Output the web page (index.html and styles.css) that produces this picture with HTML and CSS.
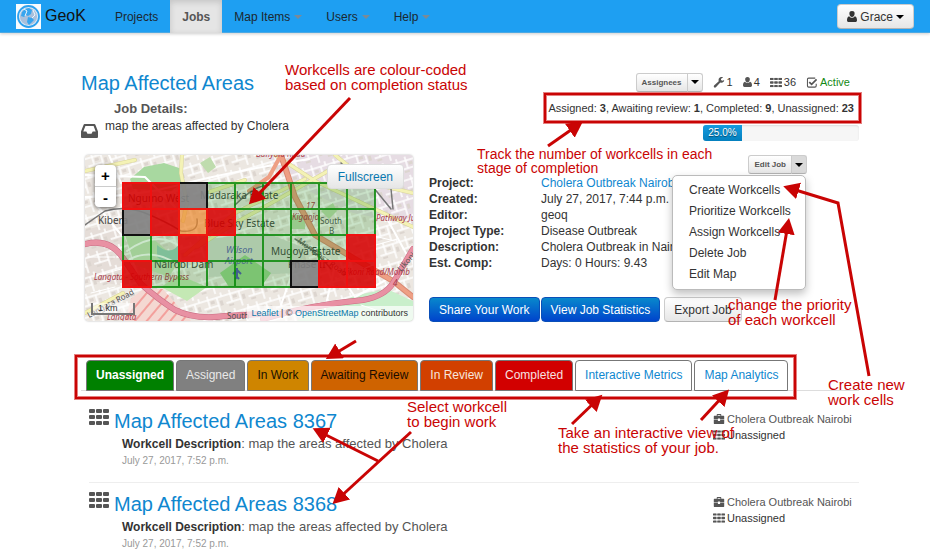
FILE: index.html
```html
<!DOCTYPE html>
<html lang="en">
<head>
<meta charset="utf-8">
<title>GeoK - Map Affected Areas</title>
<link rel="stylesheet" href="styles.css">
</head>
<body>
<svg class="sprite" aria-hidden="true">
  <symbol id="i-grid" viewBox="0 0 20 16"><path d="M1 0h4q1 0 1 1v2q0 1-1 1H1q-1 0-1-1V1q0-1 1-1zM8 0h4q1 0 1 1v2q0 1-1 1H8q-1 0-1-1V1q0-1 1-1zM15 0h4q1 0 1 1v2q0 1-1 1h-4q-1 0-1-1V1q0-1 1-1zM1 6h4q1 0 1 1v2q0 1-1 1H1q-1 0-1-1V7q0-1 1-1zM8 6h4q1 0 1 1v2q0 1-1 1H8q-1 0-1-1V7q0-1 1-1zM15 6h4q1 0 1 1v2q0 1-1 1h-4q-1 0-1-1V7q0-1 1-1zM1 12h4q1 0 1 1v2q0 1-1 1H1q-1 0-1-1v-2q0-1 1-1zM8 12h4q1 0 1 1v2q0 1-1 1H8q-1 0-1-1v-2q0-1 1-1zM15 12h4q1 0 1 1v2q0 1-1 1h-4q-1 0-1-1v-2q0-1 1-1z"/></symbol>
  <symbol id="i-user" viewBox="0 0 10 11"><path d="M5 0a2.6 2.6 0 0 1 2.6 2.8C7.600 4.500 6.500 6 5 6S2.400 4.500 2.400 2.800A2.600 2.600 0 0 1 5 0zM2.200 5.200C3 6.200 4 6.700 5 6.700s2-.5 2.800-1.500C9.500 5.500 10 7.500 10 9.200 10 10.300 9.300 11 8.400 11H1.600C.7 11 0 10.300 0 9.200 0 7.500.5 5.500 2.200 5.200z"/></symbol>
  <symbol id="i-wrench" viewBox="0 0 12 12"><path d="M11.800 3.300c-.3 1.800-1.500 3-3.200 3-.4 0-.8-.1-1.200-.2L2.600 11.300a1.400 1.400 0 0 1-2-2L5.700 4.500C5 2.300 6.300.2 8.600.1c.7 0 1.300.1 1.800.4L8.200 1.900v1.500l1.400.8z"/></symbol>
  <symbol id="i-check" viewBox="0 0 12 12"><path d="M9.500 1.200H2.400Q1 1.200 1 2.600v7Q1 11 2.400 11h6.800q1.400 0 1.400-1.400V7.300" fill="none" stroke="currentColor" stroke-width="1.200"/><path d="M3 5.500l2.600 2.500L11 2.600" fill="none" stroke="currentColor" stroke-width="1.900"/></symbol>
  <symbol id="i-case" viewBox="0 0 12 11"><path d="M3.500 2V.8Q3.500 0 4.300 0h3.400q.8 0 .8.800V2H11q1 0 1 1v3H7.200V5H4.800v1H0V3q0-1 1-1zm1-1v1h3V1zM0 6.700h4.800v1h2.400v-1H12V10q0 1-1 1H1q-1 0-1-1z"/></symbol>
  <symbol id="i-inbox" viewBox="0 0 17 14"><path fill-rule="evenodd" d="M3.600 0h9.800q.7 0 1 .7L17 7.500V13q0 1-1 1H1q-1 0-1-1V7.500L2.600.7q.3-.7 1-.7zm.8 2L2.300 7.600h3L6.500 9.800h4l1.200-2.200h3L12.600 2z"/></symbol>
</svg>

<header class="navbar">
  <a class="brand" href="#">
    <svg class="logo" viewBox="0 0 25 25" aria-hidden="true"><rect width="25" height="25" fill="#f7fbfe"/><circle cx="12.500" cy="12.500" r="10.500" fill="#dceaf7" stroke="#2da1ee" stroke-width="1.800"/><circle cx="12.500" cy="12.500" r="8.600" fill="#a8c0dc"/><path d="M13 4l3 2-1 4-3 2-2-1-2 2-3-1 1-4 3-3zM12 13l4 1 2 2-3 3-2 2-2-3z" fill="#36a5ef"/><path d="M8 5l3 2-2 5M17 6l2 5-3 3" fill="none" stroke="#eef6fc"/></svg>
    <span>GeoK</span>
  </a>
  <nav class="nav">
    <a href="#">Projects</a>
    <a href="#" class="active">Jobs</a>
    <a href="#">Map Items<i class="caret"></i></a>
    <a href="#">Users<i class="caret"></i></a>
    <a href="#">Help<i class="caret"></i></a>
  </nav>
  <button class="btn user"><svg viewBox="0 0 10 11" aria-hidden="true"><use href="#i-user"/></svg>Grace<i class="caret"></i></button>
</header>

<main class="page">
  <section class="head">
    <div class="intro">
      <h1><a href="#">Map Affected Areas</a></h1>
      <h2>Job Details:</h2>
      <p><svg viewBox="0 0 17 14" aria-hidden="true"><use href="#i-inbox"/></svg>map the areas affected by Cholera</p>
    </div>
    <div class="status">
      <div class="stats">
        <div class="split"><button class="mini">Assignees</button><button class="mini" aria-label="Show assignees"><i class="caret"></i></button></div>
        <span><svg class="s12" viewBox="0 0 12 12"><use href="#i-wrench"/></svg>1</span>
        <span><svg class="s10" viewBox="0 0 10 11"><use href="#i-user"/></svg>4</span>
        <span><svg class="s12" viewBox="0 0 20 16"><use href="#i-grid"/></svg>36</span>
        <span><svg class="s12" viewBox="0 0 12 12"><use href="#i-check"/></svg><em>Active</em></span>
      </div>
      <p class="counts">Assigned: <b>3</b>, Awaiting review: <b>1</b>, Completed: <b>9</b>, Unassigned: <b>23</b></p>
      <div class="progress"><div class="bar" style="width:25%">25.0%</div></div>
    </div>
  </section>

  <section class="job">
    <div class="map">
      <svg viewBox="0 0 328 166" preserveAspectRatio="xMidYMid slice" role="img" aria-label="Map of the job's workcells">
        <defs>
          <pattern id="streets" width="23" height="19" patternUnits="userSpaceOnUse" patternTransform="rotate(-17)"><path d="M0 4h23M0 12h15M6 0v12M15 4v15M20 0v4" fill="none" stroke="#fff" stroke-width="1.500"/><path d="M8 6h4v3H8zM17 8h3v5h-3zM2 14h5v2H2z" fill="#dcd5cf"/></pattern>
          <pattern id="hatch" width="9" height="9" patternUnits="userSpaceOnUse" patternTransform="rotate(40)"><path d="M1 0v9" stroke="#f3a09c" stroke-width="2"/></pattern>
        </defs>
        <rect width="328" height="166" fill="#ece7e1"/>
        <path d="M180 0h148v70l-60-12-60-30z" fill="#e6dce3"/>
        <path d="M0 75l38-10 40 10 20 30-30 30-68-10z" fill="#e5ddd8"/>
        <rect width="328" height="166" fill="url(#streets)"/>
        <path d="M45 24l14-12 20-4 18 6 1 14-12 8-38-2z" fill="#a8d8a0"/>
        <path d="M40 80l26 2 28 24-10 16-34-12z" fill="#cbe3bd"/>
        <path d="M72 90q14 12 23-2v16q-14 6-23-2z" fill="#9fcfc0"/>
        <path d="M122 84l60-6 40 16-10 24-88 4z" fill="#d9dcd5"/>
        <path d="M135 118l25-18 26 18-10 14h-32z" fill="#9bd58f"/>
        <path d="M222 160l50-20 30-6 26 12v20H212z" fill="#c9efcb"/>
        <path d="M58 134h20l28 32H40l6-22z" fill="#f4d8d2"/><path d="M58 134h20l28 32H40l6-22z" fill="url(#hatch)"/>
        <path d="M76 132l18-12 28 12-20 14z" fill="#c4e8b4"/>
        <path d="M115 8l10-6 6 10-8 6zM206 60h14v14h-14zM236 56l12-8 4 8-8 8z" fill="#bfdcae"/>
        <g fill="none" stroke-linecap="round" stroke-linejoin="round">
          <path d="M0 42q50 0 94-12t130-26M0 20l60 2 30 30M24 0l12 28M10 48l28 34M42 96q30-22 54-4M45 104q20-10 42 2M250 112l20 30 40-22M196 150l14-40M240 154l10-44M300 60l22 40-14 30" stroke="#fff" stroke-width="2"/>
          <path d="M0 16l50-11M97 0l-1 18 6 30-4 18M0 158l38-20M112 92l38-24 40-22 60-34M190 0l40 26 98 46M220 24l-70 34-50 42M160 25l-36 12M250 0l34 28 44 10" stroke="#d8d49c" stroke-width="4"/>
          <path d="M0 16l50-11M97 0l-1 18 6 30-4 18M0 158l38-20M112 92l38-24 40-22 60-34M190 0l40 26 98 46M220 24l-70 34-50 42M160 25l-36 12M250 0l34 28 44 10" stroke="#f4f2b5" stroke-width="3"/>
          <path d="M196 0l14 42 20 38 40 24 38 22 20 16" stroke="#d98872" stroke-width="6"/>
          <path d="M196 0l14 42 20 38 40 24 38 22 20 16M196 0l-12 22-20 14" stroke="#ee9f84" stroke-width="4"/>
          <path d="M0 89q25-6 38 14l18 26q18 16 34 26 20 10 50 6l34-2M178 164q46-14 100-19 22-4 30-17l20-34" stroke="#c96c83" stroke-width="6"/>
          <path d="M0 89q25-6 38 14l18 26q18 16 34 26 20 10 50 6l34-2M178 164q46-14 100-19 22-4 30-17l20-34" stroke="#e891a3" stroke-width="5"/>
          <path d="M0 70l20-14q20-6 40 2t36 18q18 2 16-12M150 50q20-20 34-20M256 8l8 8h14l12 10M268 12l-4 6M288 32l18 22M306 34l2 20M210 84q24 14 36 30" stroke="#777" stroke-width="1.500"/>
          <path d="M2 102h28M8 122l28-8M6 138l24-6M252 124l36-14M264 160l44-4M276 150l30 10M276 78l34 8M284 92l28-8" stroke="#fff"/>
        </g>
        <path d="M152 113v10M148 119l4-4 4 4M150 124l2-2 2 2" stroke="#5656b4" fill="none" stroke-width="2"/>
        <g class="place">
          <text x="43" y="47">Ngumo West</text><text x="115" y="44">Madaraka Estate</text><text x="13" y="69">Kibera</text>
          <text x="119" y="72">Blue Sky Estate</text><text x="69" y="113">Nairobi Dam</text><text x="186" y="100">Mugoya Estate</text><text x="203" y="113">Phase II</text>
        </g>
        <g class="road">
          <text x="9" y="125">Langata - Southern Bypass</text><text x="207" y="65">Kiganjo</text><text x="291" y="66">Pathway Ju</text><text x="258" y="120">Likoni Road/Momb</text><text x="22" y="165">Langata</text><text x="171" y="2">Bunyala Road</text><text x="221" y="54">17</text><text x="308" y="131">4</text>
        </g>
        <g class="area"><text x="141" y="98">Wilson</text><text x="140" y="109">Airport</text></g>
        <g class="street"><text x="235" y="69">South</text><text x="244" y="79">B</text><text x="142" y="164">South</text><text transform="translate(212 87) rotate(36)">Mombasa Road</text><text transform="translate(4 163) rotate(-28)">Langata Road</text><text transform="translate(316 117) rotate(-48)">Likoni</text></g>

        <g class="cell green">
          <path d="M122 28h28v26h-28zM150 28h28v26h-28zM178 28h28v26h-28zM206 28h28v26h-28zM234 28h28v26h-28zM262 28h28v26h-28zM150 54h28v26h-28zM178 54h28v26h-28zM206 54h28v26h-28zM234 54h28v26h-28zM262 54h28v26h-28zM38 80h28v26H38zM66 80h28v26H66zM122 80h28v26h-28zM150 80h28v26h-28zM178 80h28v26h-28zM206 80h28v26h-28zM234 80h28v26h-28zM66 106h28v26H66zM94 106h28v26H94zM122 106h28v26h-28zM150 106h28v26h-28zM178 106h28v26h-28z"/>
        </g>
        <g class="cell gray"><path d="M94 28h28v26H94zM38 54h28v26H38zM206 106h28v26h-28z"/></g>
        <g class="cell red"><path d="M38 28h28v26H38zM66 28h28v26H66zM66 54h28v26H66zM122 54h28v26h-28zM94 80h28v26H94zM262 80h28v26h-28zM38 106h28v26H38zM234 106h28v26h-28zM262 106h28v26h-28z"/></g>
        <g class="cell orange"><path d="M94 54h28v26H94z"/></g>
      </svg>
      <div class="zoom"><button aria-label="Zoom in">+</button><button aria-label="Zoom out">-</button></div>
      <button class="btn full">Fullscreen</button>
      <span class="scale">1 km</span>
      <p class="credit"><a href="#">Leaflet</a> | © <a href="#">OpenStreetMap</a> contributors</p>
    </div>
    <div class="info">
      <div class="edit">
        <div class="split"><button class="mini">Edit Job</button><button class="mini open" aria-label="Edit options" aria-expanded="true"><i class="caret"></i></button></div>
        <ul class="menu">
          <li><a href="#">Create Workcells</a></li>
          <li><a href="#">Prioritize Workcells</a></li>
          <li><a href="#">Assign Workcells</a></li>
          <li><a href="#">Delete Job</a></li>
          <li><a href="#">Edit Map</a></li>
        </ul>
      </div>
      <dl>
        <dt>Project:</dt><dd><a href="#">Cholera Outbreak Nairobi</a></dd>
        <dt>Created:</dt><dd>July 27, 2017, 7:44 p.m.</dd>
        <dt>Editor:</dt><dd>geoq</dd>
        <dt>Project Type:</dt><dd>Disease Outbreak</dd>
        <dt>Description:</dt><dd>Cholera Outbreak in Nairobi</dd>
        <dt>Est. Comp:</dt><dd>Days: 0 Hours: 9.43</dd>
      </dl>
      <div class="actions">
        <button class="btn primary">Share Your Work</button>
        <button class="btn primary">View Job Statistics</button>
        <button class="btn export">Export Job</button>
      </div>
    </div>
  </section>

  <nav class="tabs">
    <a href="#" class="t-un">Unassigned</a>
    <a href="#" class="t-as">Assigned</a>
    <a href="#" class="t-work">In Work</a>
    <a href="#" class="t-await">Awaiting Review</a>
    <a href="#" class="t-rev">In Review</a>
    <a href="#" class="t-done">Completed</a>
    <a href="#">Interactive Metrics</a>
    <a href="#">Map Analytics</a>
  </nav>

  <section class="list">
    <article>
      <svg class="gicon" viewBox="0 0 20 16" aria-hidden="true"><use href="#i-grid"/></svg>
      <div class="body">
        <h3><a href="#">Map Affected Areas 8367</a></h3>
        <p><b>Workcell Description</b>: map the areas affected by Cholera</p>
        <time>July 27, 2017, 7:52 p.m.</time>
      </div>
      <ul class="meta">
        <li><svg viewBox="0 0 12 11"><use href="#i-case"/></svg>Cholera Outbreak Nairobi</li>
        <li class="dark"><svg viewBox="0 0 20 16"><use href="#i-grid"/></svg>Unassigned</li>
      </ul>
    </article>
    <article>
      <svg class="gicon" viewBox="0 0 20 16" aria-hidden="true"><use href="#i-grid"/></svg>
      <div class="body">
        <h3><a href="#">Map Affected Areas 8368</a></h3>
        <p><b>Workcell Description</b>: map the areas affected by Cholera</p>
        <time>July 27, 2017, 7:52 p.m.</time>
      </div>
      <ul class="meta">
        <li><svg viewBox="0 0 12 11"><use href="#i-case"/></svg>Cholera Outbreak Nairobi</li>
        <li class="dark"><svg viewBox="0 0 20 16"><use href="#i-grid"/></svg>Unassigned</li>
      </ul>
    </article>
  </section>
</main>

<div class="notes">
  <svg width="930" height="549" aria-hidden="true">
    <defs><marker id="head" markerUnits="userSpaceOnUse" markerWidth="18" markerHeight="18" refX="10" refY="8.500" orient="auto"><path d="M0 0l16 8.500-16 8.500z" fill="#c90404"/></marker></defs>
    <g fill="none" stroke="#e58080" stroke-width="4"><rect x="545" y="94" width="315" height="28"/><rect x="76" y="356" width="719" height="42"/></g>
    <g fill="none" stroke="#c90404" stroke-width="3">
      <g stroke-width="2"><rect x="545" y="94" width="315" height="28"/><rect x="76" y="356" width="719" height="42"/></g>
      <path marker-end="url(#head)" d="M350 98L253 200"/><path marker-end="url(#head)" d="M548 146L578 125"/><path marker-end="url(#head)" d="M869 376L838 203L789 188"/><path marker-end="url(#head)" d="M775 300L788 224"/><path marker-end="url(#head)" d="M356 341L331 356"/><path marker-end="url(#head)" d="M411 432L337 500"/><path marker-end="url(#head)" d="M378 461L318 431"/><path marker-end="url(#head)" d="M572 424L598 399"/><path marker-end="url(#head)" d="M701 420L725 394"/>
    </g>
  </svg>
  <p class="note n-color">Workcells are colour-coded<br>based on completion status</p>
  <p class="note n-track">Track the number of workcells in each<br>stage of completion</p>
  <p class="note n-priority">change the priority<br>of each workcell</p>
  <p class="note n-create">Create new<br>work cells</p>
  <p class="note n-select">Select workcell<br>to begin work</p>
  <p class="note n-stats">Take an interactive view of<br>the statistics of your job.</p>
</div>
</body>
</html>
```
FILE: styles.css
```css
* { box-sizing: border-box; }
html { scrollbar-width: none; }
body {
  margin: 0;
  position: relative;
  height: 100vh;
  overflow: hidden;
  background: #fff;
  color: #333;
  font: 12px/16px "Liberation Sans", Arial, sans-serif;
}
h1, h2, h3, p, ul, dl, dd { margin: 0; padding: 0; }
ul { list-style: none; }
a { color: #0f87cf; text-decoration: none; }
button { font-family: inherit; color: #333; margin: 0; cursor: pointer; }
svg { display: block; fill: currentColor; }
.sprite { position: absolute; width: 0; height: 0; }

.caret {
  display: inline-block;
  border: 4px solid transparent;
  border-top-color: #000;
  border-bottom: 0;
}
.btn {
  height: 25px;
  padding: 0 10px;
  border: 1px solid #ccc;
  border-bottom-color: #b3b3b3;
  border-radius: 4px;
  background: linear-gradient(#fff, #e6e6e6);
  font-size: 12px;
}

.navbar {
  display: flex;
  height: 33px;
  padding: 0 16px;
  background: #1e9ff2;
  border-bottom: 1px solid #4ba9e4;
  box-shadow: 0 1px 3px rgba(0, 0, 0, .2);
}
.brand { display: flex; align-items: center; gap: 4px; margin-right: 17px; color: #111; font-size: 16px; }
.brand span { padding-bottom: 1px; }
.logo { width: 25px; height: 25px; }
.nav { display: flex; height: 33px; }
.nav a { display: flex; align-items: center; gap: 4px; padding: 0 12px; color: #1c2730; }
.nav .active {
  background: #e5e5e5;
  color: #555;
  font-weight: bold;
  box-shadow: inset 0 2px 6px rgba(0, 0, 0, .15);
}
.nav .caret { border-top-color: #7b8a96; }
.user { display: flex; align-items: center; gap: 3px; margin: 4px 0 0 auto; padding: 0 9px; }
.user svg { width: 10px; height: 11px; }

.page { padding: 0 71px 0 81px; }
.head { display: flex; justify-content: space-between; height: 122px; padding-top: 38px; }
.intro h1 { font-size: 20px; line-height: 24px; font-weight: normal; }
.intro h2 { margin: 6px 0 1px 33px; font-size: 13px; line-height: 16px; color: #555; }
.intro p { display: flex; gap: 7px; }
.intro svg { width: 17px; height: 14px; margin-top: 6px; color: #555; }

.status { display: flex; flex-direction: column; align-items: flex-end; font-size: 11px; }
.stats { display: flex; align-items: center; gap: 10px; height: 22px; padding-right: 9px; }
.stats span { display: flex; align-items: center; gap: 2px; }
.stats em { font-style: normal; color: #138a13; }
.stats svg { color: #555; }
.s12 { width: 12px; height: 11px; }
.s10 { width: 9px; height: 10px; }
.split { display: flex; }
.mini {
  height: 19px;
  padding: 0 5px;
  border: 1px solid #ccc;
  border-bottom-color: #b3b3b3;
  border-radius: 3px 0 0 3px;
  background: linear-gradient(#fff, #e6e6e6);
  font-size: 8px;
  font-weight: bold;
  color: #555;
}
.mini + .mini { margin-left: -1px; padding: 0 3px; border-radius: 0 3px 3px 0; }
.mini.open { background: #dadada; }
.mini .caret { display: block; }
.counts { margin: 7px 5px 9px 0; }
.progress {
  width: 156px;
  height: 16px;
  border-radius: 3px;
  background: #f6f6f6;
  box-shadow: inset 0 1px 2px rgba(0, 0, 0, .1);
  overflow: hidden;
}
.bar {
  height: 16px;
  background: linear-gradient(#149bdf, #0480be);
  color: #fff;
  font-size: 10px;
  text-align: center;
  text-shadow: 0 1px 1px rgba(0, 0, 0, .5);
}

.job { display: grid; grid-template-columns: 328px 1fr; gap: 16px; padding-left: 4px; }
.map {
  position: relative;
  height: 166px;
  border-radius: 4px;
  overflow: hidden;
  box-shadow: 0 0 2px rgba(0, 0, 0, .35);
}
.map > svg { width: 100%; height: 100%; }
.place { font: 10px "Noto Sans", sans-serif; fill: #444; }
.road { font: italic 8px "Noto Sans", sans-serif; fill: #a83a4a; }
.area { font: italic 9px "Noto Sans", sans-serif; fill: #5e5eb4; }
.street { font: 8px "Noto Sans", sans-serif; fill: #555; }
.cell { stroke-width: 2; }
.green { fill: #008000; fill-opacity: .2; stroke: #0a8a0a; stroke-opacity: .85; }
.red { fill: #d50000; fill-opacity: .88; stroke: #f01010; }
.gray { fill: #808080; fill-opacity: .92; stroke: #111; }
.orange { fill: #e8862a; fill-opacity: .7; stroke: #f01a10; }
.zoom {
  position: absolute;
  left: 10px;
  top: 10px;
  width: 21px;
  border-radius: 4px;
  background: #fff;
  box-shadow: 0 1px 4px rgba(0, 0, 0, .6);
}
.zoom button {
  display: block;
  width: 21px;
  height: 21px;
  padding: 0;
  border: 0;
  background: none;
  font-size: 15px;
  font-weight: bold;
  color: #000;
}
.zoom button + button { border-top: 1px solid #ccc; }
.full { position: absolute; right: 9px; top: 9px; border-color: #ddd; color: #0878b0; }
.scale {
  position: absolute;
  left: 6px;
  bottom: 6px;
  width: 44px;
  height: 12px;
  padding-left: 5px;
  border: 2px solid #777;
  border-top: 0;
  background: rgba(255, 255, 255, .5);
  font-size: 9px;
  line-height: 10px;
}
.credit {
  position: absolute;
  right: 0;
  bottom: 0;
  padding: 0 5px 0 4px;
  background: rgba(255, 255, 255, .7);
  font-size: 9px;
  line-height: 15px;
}
.credit a { color: #0878a8; }

.edit { position: relative; display: flex; justify-content: flex-end; padding-right: 52px; }
.menu {
  position: absolute;
  z-index: 1;
  top: 20px;
  right: 53px;
  width: 134px;
  padding: 4px 0;
  border: 1px solid #bbb;
  border-radius: 5px;
  background: #fff;
  box-shadow: 0 4px 9px rgba(0, 0, 0, .25);
}
.menu a { display: block; padding: 0 16px; line-height: 21px; color: #333; white-space: nowrap; }
.info dl { display: grid; grid-template-columns: 112px 1fr; }
.info dt { font-weight: bold; }
.info dd { white-space: nowrap; }
.info .edit + dl { margin: 1px 0 26px; }
.actions { display: flex; gap: 1px; }
.primary { border: 1px solid #0a4fb8; background: linear-gradient(#0888cc, #0044cc); color: #fff; padding: 0 9px; }
.actions .export { margin-left: 3px; padding: 0 9px; }

.tabs { display: flex; gap: 2px; margin-top: 38px; padding-left: 5px; border-bottom: 1px solid #ddd; }
.tabs a {
  padding: 0 9px;
  border: 1px solid #777;
  border-radius: 4px 4px 0 0;
  line-height: 29px;
  margin-bottom: -1px;
  white-space: nowrap;
}
.tabs .t-un { background: #008000; color: #fff; font-weight: bold; }
.tabs .t-as { background: #808080; color: #e8e8e8; }
.tabs .t-work { background: #cf8500; color: #1a1100; }
.tabs .t-await { background: #cf6300; color: #1a0c00; }
.tabs .t-rev { background: #d24000; color: #f7e5dd; }
.tabs .t-done { background: #d20000; color: #f7e2e2; }

.list { padding: 9px 0 0 8px; }
.list article { display: flex; height: 83px; padding-top: 9px; border-bottom: 1px solid #eee; }
.gicon { width: 20px; height: 16px; margin-right: 5px; color: #555; }
.body { flex: 1; }
.body h3 { font-size: 20px; line-height: 24px; font-weight: normal; }
.body p { margin: 3px 0 2px 8px; font-size: 13px; color: #555; }
.body b { font-size: 12px; color: #333; }
.body time { display: block; margin-left: 8px; font-size: 10px; line-height: 14px; color: #999; }
.meta { width: 146px; padding-top: 2px; font-size: 11px; color: #555; }
.meta li { display: flex; align-items: center; gap: 2px; white-space: nowrap; }
.meta svg { width: 12px; height: 10px; color: #555; }
.meta .dark { color: #333; }

.notes { position: absolute; z-index: 5; inset: 0; pointer-events: none; }
.note { position: absolute; color: #c90404; font-size: 15px; line-height: 15px; white-space: nowrap; }
.n-color { left: 285px; top: 62px; }
.n-track { left: 477px; top: 147px; font-size: 14px; line-height: 14px; }
.n-priority { left: 728px; top: 297px; }
.n-create { left: 828px; top: 377px; }
.n-select { left: 407px; top: 399px; }
.n-stats { left: 558px; top: 425px; }
```
